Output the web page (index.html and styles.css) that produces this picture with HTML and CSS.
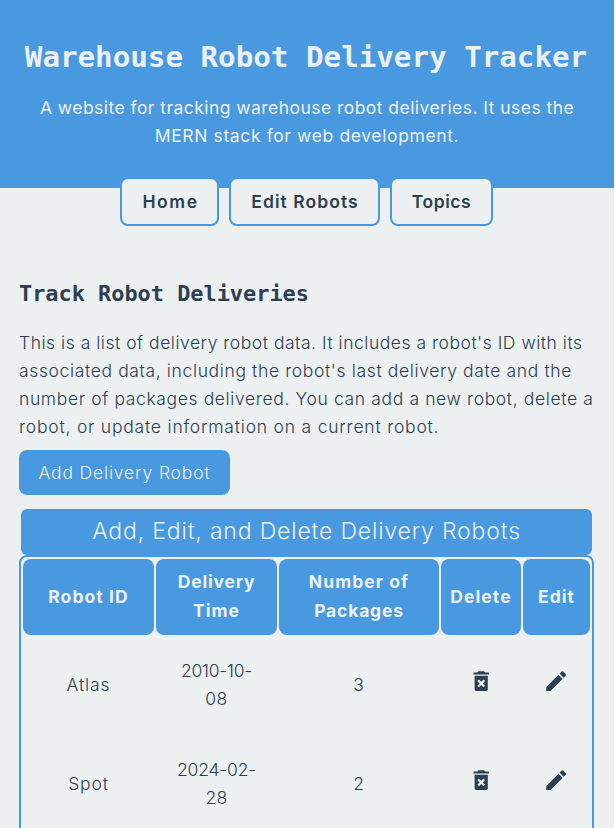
FILE: index.html
```
<!DOCTYPE html>
<html lang="en">
<head>
<meta charset="utf-8">
<title>Warehouse Robot Delivery Tracker</title>
<link rel="stylesheet" href="styles.css">
</head>
<body>
<svg class="defs" width="0" height="0" aria-hidden="true">
  <symbol id="trash" viewBox="0 0 24 24"><path d="M6 19c0 1.1.9 2 2 2h8c1.1 0 2-.9 2-2V7H6v12zm2.46-7.12 1.41-1.41L12 12.59l2.12-2.12 1.41 1.41L13.41 14l2.12 2.12-1.41 1.41L12 15.41l-2.12 2.12-1.41-1.41L10.59 14l-2.13-2.12zM15.5 4l-1-1h-5l-1 1H5v2h14V4z"/></symbol>
  <symbol id="pencil" viewBox="0 0 24 24"><path d="M3 17.25V21h3.75L17.81 9.94l-3.75-3.75L3 17.25zM20.71 7.04a1 1 0 0 0 0-1.41l-2.34-2.34a1 1 0 0 0-1.41 0l-1.83 1.83 3.75 3.75 1.83-1.83z"/></symbol>
</svg>
<div class="page">
  <header>
    <h1>Warehouse Robot Delivery Tracker</h1>
    <p><span class="line intro-a">A website for tracking warehouse robot deliveries. It uses the</span>
    <span class="line intro-b">MERN stack for web development.</span></p>
  </header>
  <nav>
    <a class="home">Home</a><a class="robots">Edit Robots</a><a class="topics">Topics</a>
  </nav>
  <main>
    <h2>Track Robot Deliveries</h2>
    <p><span class="line body-a">This is a list of delivery robot data. It includes a robot's ID with its</span>
    <span class="line body-b">associated data, including the robot's last delivery date and the</span>
    <span class="line body-b">number of packages delivered. You can add a new robot, delete a</span>
    <span class="line body-c">robot, or update information on a current robot.</span></p>
    <button>Add Delivery Robot</button>
    <table>
      <caption>Add, Edit, and Delete Delivery Robots</caption>
      <colgroup><col class="c-id"><col class="c-time"><col class="c-count"><col class="c-delete"><col class="c-edit"></colgroup>
      <thead><tr><th>Robot ID</th><th><span class="tight">Delivery</span><br>Time</th><th>Number of<br><span class="tight">Packages</span></th><th>Delete</th><th>Edit</th></tr></thead>
      <tbody>
        <tr><td>Atlas</td><td class="date">2010-10-<br><span class="day">08</span></td><td>3</td><td class="icon"><svg><use href="#trash"/></svg></td><td class="icon"><svg><use href="#pencil"/></svg></td></tr>
        <tr><td>Spot</td><td class="date">2024-02-<br><span class="day">28</span></td><td>2</td><td class="icon"><svg><use href="#trash"/></svg></td><td class="icon"><svg><use href="#pencil"/></svg></td></tr>
      </tbody>
    </table>
  </main>
</div>
</body>
</html>
```
FILE: styles.css
```
* { box-sizing: border-box; }
html { background: #fff; }
body { margin: 0; height: 828px; overflow: hidden; font: 300 17.5px/28.16px Inter, "Liberation Sans", sans-serif; color: #2c3e50; }
.defs { display: block; }
.page { width: 614px; height: 828px; overflow: hidden; background: #ecf0f1; }
h1, h2, p { margin: 0; }
h1, h2 { font-family: "DejaVu Sans Mono", monospace; font-weight: 700; }
.line { display: block; white-space: nowrap; }

header { height: 188px; padding-top: 37px; background: #4899df; color: #ecf0f1; text-align: center; }
h1 { padding-right: 2px; font-size: 29.2px; line-height: 41px; white-space: nowrap; }
header p { margin-top: 16px; font-weight: 400; }
.intro-a { letter-spacing: .45px; }
.intro-b { letter-spacing: .62px; }

nav { display: flex; justify-content: center; gap: 10px; margin-top: -11px; padding-right: 1px; }
nav a { height: 49px; border: 2px solid #4899df; border-radius: 8px; background: #ecf0f1; text-align: center; font-weight: 600; line-height: 46px; }
.home { width: 99px; padding-left: 2px; letter-spacing: 1.6px; }
.robots { width: 151px; padding-left: 1px; letter-spacing: 1.05px; }
.topics { width: 103px; letter-spacing: .53px; }

main { padding: 53px 20px 0 19px; }
h2 { font-size: 21.9px; line-height: 29px; }
main p { margin-top: 20.6px; }
.body-a { letter-spacing: .52px; }
.body-b { letter-spacing: .63px; }
.body-c { letter-spacing: .79px; }
button { display: block; width: 211px; height: 45px; margin: 8.4px 0 14px; padding: 1px 0 0; border: 0; border-radius: 8px; background: #4899df; color: #ecf0f1; font: inherit; letter-spacing: .85px; }

table { width: 575px; table-layout: fixed; border: 2px solid #4899df; border-radius: 8px; border-collapse: separate; border-spacing: 2px; text-align: center; }
caption { width: 571px; height: 46px; margin: 0 2px; border-radius: 6px; background: #4899df; color: #ecf0f1; font-size: 23px; line-height: 45px; letter-spacing: .82px; }
.c-id { width: 131px; }
.c-time { width: 121px; }
.c-count { width: 160px; }
.c-delete { width: 80px; }
.c-edit { width: 67px; }
th { height: 76px; padding: 0; border-radius: 8px; background: #4899df; color: #ecf0f1; font-weight: 700; letter-spacing: 1.08px; }
.tight { letter-spacing: .8px; }
td { height: 96.5px; padding: 0; letter-spacing: .86px; }
tr + tr td { padding-top: 1px; }
.date { letter-spacing: -.2px; }
.day { letter-spacing: .4px; }
.icon { letter-spacing: 0; }
.icon svg { display: block; width: 26.4px; height: 26.4px; margin: -8px auto 0; fill: #2c3e50; }
```
